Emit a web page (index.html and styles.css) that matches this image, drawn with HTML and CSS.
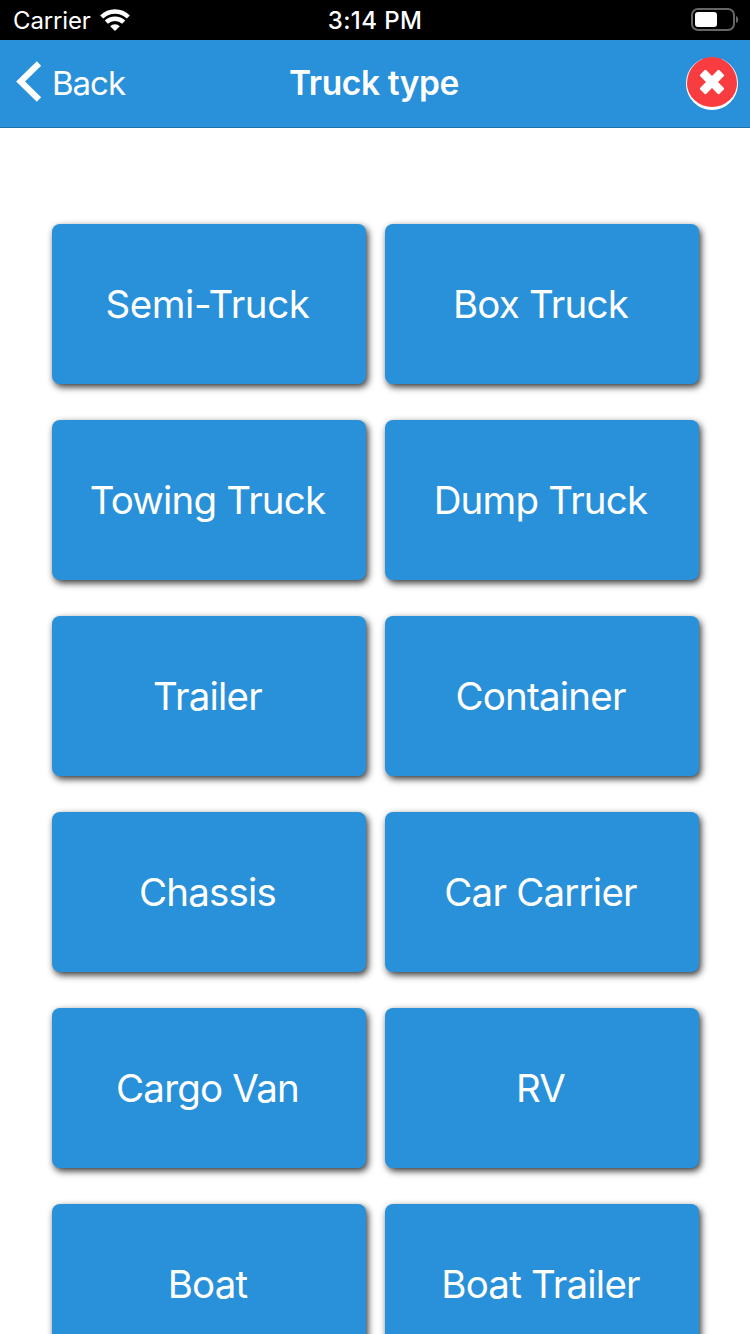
FILE: index.html
```html
<!DOCTYPE html>
<html lang="en">
<head>
    <meta charset="UTF-8">
    <meta name="viewport" content="width=device-width, initial-scale=1.0">
    <title>Truck type</title>
    <link rel="stylesheet" href="styles.css">
</head>
<body>
    <div class="status-bar">
        <div class="carrier">
            <span>Carrier</span>
            <svg class="wifi" width="30" height="22" viewBox="0 0 30 22">
                <path d="M1.700 8a19 19 0 0 1 26.600 0" />
                <path d="M6.300 13.200a12.500 12.500 0 0 1 17.400 0" />
                <path class="dot" d="M15 22l-4.800-4.700a6.800 6.800 0 0 1 9.600 0z" />
            </svg>
        </div>
        <div class="time">3:14 PM</div>
        <svg class="battery" width="48" height="24" viewBox="0 0 48 24">
            <rect class="shell" x="1" y="1" width="42" height="21" rx="6" />
            <rect class="level" x="4" y="4" width="22" height="15" rx="3" />
            <path class="cap" d="M45 8c3 1 3 6 0 7z" />
        </svg>
    </div>

    <div class="navbar">
        <a class="back" href="#">
            <svg width="26" height="42" viewBox="0 0 26 42">
                <path d="M23 2.500L4.600 20.500l18.400 18" />
            </svg>
            <span>Back</span>
        </a>
        <h1>Truck type</h1>
        <button class="close" aria-label="Close">
            <svg width="26" height="26" viewBox="0 0 26 26">
                <path d="M6.400 1.800L13 8.400l6.600-6.600 4.600 4.600L17.600 13l6.600 6.600-4.600 4.600L13 17.600l-6.600 6.600-4.600-4.600L8.400 13 1.800 6.400z" />
            </svg>
        </button>
    </div>

    <div class="types">
        <button class="type hyphenated">Semi-Truck</button>
        <button class="type">Box Truck</button>
        <button class="type">Towing Truck</button>
        <button class="type">Dump Truck</button>
        <button class="type">Trailer</button>
        <button class="type">Container</button>
        <button class="type">Chassis</button>
        <button class="type">Car Carrier</button>
        <button class="type">Cargo Van</button>
        <button class="type">RV</button>
        <button class="type">Boat</button>
        <button class="type">Boat Trailer</button>
    </div>
</body>
</html>
```

FILE: styles.css
```css
body {
    margin: 0;
    height: 1334px;
    overflow: hidden;
    background-color: white;
    color: white;
    font-family: Inter, sans-serif;
}

.status-bar {
    display: grid;
    grid-template-columns: 1fr auto 1fr;
    align-items: center;
    height: 40px;
    padding: 0 11px 0 13px;
    background-color: black;
    font-size: 24px;
}

.carrier {
    display: flex;
    align-items: center;
    gap: 9px;
    letter-spacing: -0.15px;
}

.wifi path {
    fill: none;
    stroke: white;
    stroke-width: 4.4;
}

.wifi .dot {
    fill: white;
    stroke: none;
}

.time {
    padding-right: 2px;
    font-weight: 500;
    letter-spacing: 0.4px;
}

.battery {
    justify-self: end;
}

.shell {
    fill: none;
    stroke: #666;
    stroke-width: 2;
}

.level {
    fill: white;
}

.cap {
    fill: #666;
}

.navbar {
    display: grid;
    grid-template-columns: 1fr auto 1fr;
    align-items: center;
    box-sizing: border-box;
    height: 88px;
    padding: 0 12px 1px 16px;
    background-color: #2990da;
    border-bottom: 1px solid #2070aa;
}

.back {
    display: flex;
    align-items: center;
    gap: 10px;
    color: white;
    font-size: 33px;
    letter-spacing: -1px;
    text-decoration: none;
}

.back svg {
    margin-bottom: 3px;
}

.back path {
    fill: none;
    stroke: white;
    stroke-width: 6.2;
}

h1 {
    margin: 0;
    padding-right: 6px;
    font-size: 33.5px;
    font-weight: 600;
    letter-spacing: -0.4px;
}

.close {
    display: flex;
    align-items: center;
    justify-content: center;
    justify-self: end;
    box-sizing: border-box;
    width: 52px;
    height: 53px;
    padding: 0;
    border: 1px solid white;
    border-top: none;
    border-bottom-width: 3px;
    border-radius: 50%;
    background-color: #f93c3f;
}

.close path {
    fill: white;
    stroke: white;
    stroke-width: 2;
    stroke-linejoin: round;
}

.types {
    display: grid;
    grid-template-columns: 314px 314px;
    grid-auto-rows: 160px;
    gap: 36px 19px;
    padding: 96px 52px 0;
}

.type {
    padding: 0 3px 0 0;
    border: none;
    border-radius: 8px;
    background-color: #2990da;
    box-shadow: 2px 3px 7px rgba(0, 0, 0, 0.8);
    color: white;
    font-family: inherit;
    font-size: 38.5px;
    letter-spacing: -0.8px;
}

.hyphenated {
    letter-spacing: -0.4px;
}
```
